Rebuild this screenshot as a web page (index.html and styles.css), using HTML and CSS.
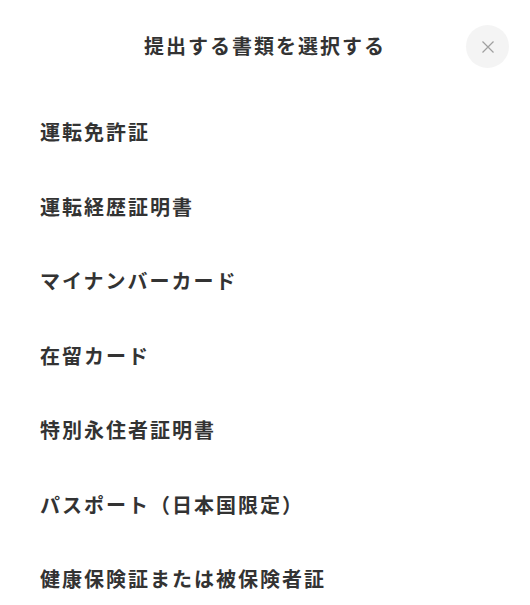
FILE: index.html
```html
<!DOCTYPE html>
<html lang="ja">
<head>
<meta charset="utf-8">
<title>提出する書類を選択する</title>
<link rel="stylesheet" href="styles.css">
</head>
<body>
<div class="sheet">
  <header class="head">
    <h1 class="title">提出する書類を選択する</h1>
    <button class="close" aria-label="閉じる">
      <svg width="14" height="14" viewBox="0 0 14 14"><path d="M1.5 1.5l11 11M12.5 1.5l-11 11" stroke="#a0a0a0" stroke-width="1.2" fill="none"/></svg>
    </button>
  </header>
  <ul class="list">
    <li class="item">運転免許証</li>
    <li class="item">運転経歴証明書</li>
    <li class="item">マイナンバーカード</li>
    <li class="item">在留カード</li>
    <li class="item">特別永住者証明書</li>
    <li class="item">パスポート（日本国限定）</li>
    <li class="item">健康保険証または被保険者証</li>
  </ul>
</div>
</body>
</html>
```
FILE: styles.css
```css
* { box-sizing: border-box; }
html, body { margin: 0; padding: 0; background: #fff; }
body { font-family: "Noto Sans CJK JP", "Noto Sans", sans-serif; color: #333; overflow: hidden; height: 605px; }
.sheet { width: 530px; }
.head { position: relative; height: 92px; display: flex; justify-content: center; align-items: center; }
.title { margin: 0; font-size: 20px; letter-spacing: 2px; font-weight: 700; line-height: 28px; }
.close { position: absolute; top: 25px; right: 21px; width: 43px; height: 43px; border: 0; border-radius: 50%; background: #f4f4f4; display: flex; align-items: center; justify-content: center; padding: 0; }
.list { list-style: none; margin: 0; padding: 0 40px; }
.item { font-size: 20px; letter-spacing: 2px; font-weight: 700; height: 74.5px; line-height: 28px; padding-top: 26px; }
```
